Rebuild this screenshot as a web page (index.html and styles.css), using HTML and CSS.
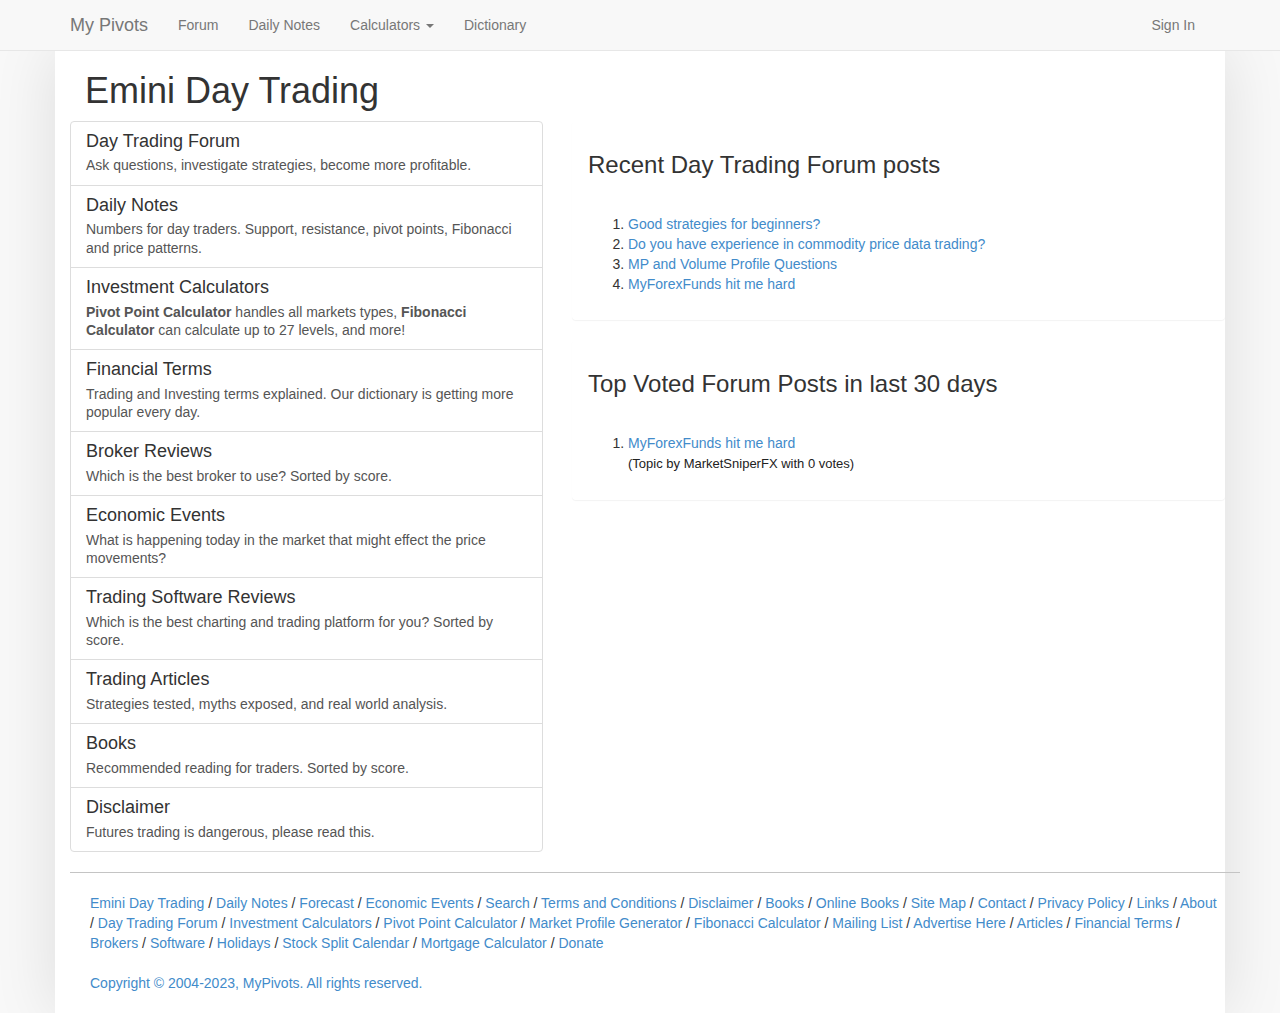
FILE: index.html
```html
<!DOCTYPE html>
<html lang="en">
<head>
<meta charset="utf-8">
<title>Emini Day Trading</title>
<link rel="stylesheet" href="styles.css">
</head>
<body>
<nav class="navbar">
  <div class="nav-inner">
    <a class="brand" href="#">My Pivots</a>
    <ul class="nav">
      <li><a href="#">Forum</a></li>
      <li><a href="#">Daily Notes</a></li>
      <li><a href="#">Calculators <span class="caret"></span></a></li>
      <li><a href="#">Dictionary</a></li>
    </ul>
    <ul class="nav nav-right">
      <li><a href="#">Sign In</a></li>
    </ul>
  </div>
</nav>
<div class="page">
  <h1 class="title">Emini Day Trading</h1>
  <div class="row">
    <div class="list-group">
      <a class="item" href="#"><h4>Day Trading Forum</h4><p>Ask questions, investigate strategies, become more profitable.</p></a>
      <a class="item" href="#"><h4>Daily Notes</h4><p>Numbers for day traders. Support, resistance, pivot points, Fibonacci and price patterns.</p></a>
      <a class="item" href="#"><h4>Investment Calculators</h4><p><b>Pivot Point Calculator</b> handles all markets types, <b>Fibonacci Calculator</b> can calculate up to 27 levels, and more!</p></a>
      <a class="item" href="#"><h4>Financial Terms</h4><p>Trading and Investing terms explained. Our dictionary is getting more popular every day.</p></a>
      <a class="item" href="#"><h4>Broker Reviews</h4><p>Which is the best broker to use? Sorted by score.</p></a>
      <a class="item" href="#"><h4>Economic Events</h4><p>What is happening today in the market that might effect the price movements?</p></a>
      <a class="item" href="#"><h4>Trading Software Reviews</h4><p>Which is the best charting and trading platform for you? Sorted by score.</p></a>
      <a class="item" href="#"><h4>Trading Articles</h4><p>Strategies tested, myths exposed, and real world analysis.</p></a>
      <a class="item" href="#"><h4>Books</h4><p>Recommended reading for traders. Sorted by score.</p></a>
      <a class="item" href="#"><h4>Disclaimer</h4><p>Futures trading is dangerous, please read this.</p></a>
    </div>
    <div class="side">
      <div class="panel">
        <h3>Recent Day Trading Forum posts</h3>
        <ol>
          <li><a href="#">Good strategies for beginners?</a></li>
          <li><a href="#">Do you have experience in commodity price data trading?</a></li>
          <li><a href="#">MP and Volume Profile Questions</a></li>
          <li><a href="#">MyForexFunds hit me hard</a></li>
        </ol>
      </div>
      <div class="panel">
        <h3>Top Voted Forum Posts in last 30 days</h3>
        <ol>
          <li><a href="#">MyForexFunds hit me hard</a><br><small>(Topic by MarketSniperFX with 0 votes)</small></li>
        </ol>
      </div>
    </div>
  </div>
  <footer class="footer">
    <hr class="rule">
    <div class="footer-body">
      <p class="links"><a href="#">Emini Day Trading</a> / <a href="#">Daily Notes</a> / <a href="#">Forecast</a> / <a href="#">Economic Events</a> / <a href="#">Search</a> / <a href="#">Terms and Conditions</a> / <a href="#">Disclaimer</a> / <a href="#">Books</a> / <a href="#">Online Books</a> / <a href="#">Site Map</a> / <a href="#">Contact</a> / <a href="#">Privacy Policy</a> / <a href="#">Links</a> / <a href="#">About</a> / <a href="#">Day Trading Forum</a> / <a href="#">Investment Calculators</a> / <a href="#">Pivot Point Calculator</a> / <a href="#">Market Profile Generator</a> / <a href="#">Fibonacci Calculator</a> / <a href="#">Mailing List</a> / <a href="#">Advertise Here</a> / <a href="#">Articles</a> / <a href="#">Financial Terms</a> / <a href="#">Brokers</a> / <a href="#">Software</a> / <a href="#">Holidays</a> / <a href="#">Stock Split Calendar</a> / <a href="#">Mortgage Calculator</a> / <a href="#">Donate</a></p>
      <p class="copy">Copyright © 2004-2023, MyPivots. All rights reserved.</p>
    </div>
  </footer>
</div>
</body>
</html>
```
FILE: styles.css
```css
* { box-sizing: border-box; }
html, body { margin: 0; }
body {
  background: #f8f8f8;
  font-family: "Liberation Sans", Arial, Helvetica, sans-serif;
  font-size: 14px;
  line-height: 20px;
  color: #333;
}
a { color: #428bca; text-decoration: none; }

.navbar {
  position: relative;
  z-index: 2;
  background: #f8f8f8;
  border-bottom: 1px solid #e7e7e7;
  height: 51px;
}
.nav-inner {
  width: 1170px;
  margin: 0 auto;
  display: flex;
  align-items: flex-start;
}
.brand {
  display: block;
  padding: 15px;
  font-size: 18px;
  line-height: 20px;
  color: #777;
}
.nav {
  list-style: none;
  margin: 0;
  padding: 0;
  display: flex;
}
.nav a {
  display: block;
  padding: 15px;
  line-height: 20px;
  color: #777;
}
.nav-right { margin-left: auto; margin-right: 15px; }
.caret {
  display: inline-block;
  width: 0;
  height: 0;
  margin-left: 2px;
  vertical-align: middle;
  border-top: 4px solid #777;
  border-left: 4px solid transparent;
  border-right: 4px solid transparent;
}

.page {
  position: relative;
  z-index: 1;
  width: 1170px;
  margin: 0 auto;
  background: #fff;
  box-shadow: 0 0 60px rgba(0, 0, 0, 0.11);
  padding: 20px 0 20px 15px;
  min-height: 962px;
}
.title {
  margin: 0 0 10px;
  padding-left: 15px;
  font-size: 36px;
  line-height: 39.6px;
  font-weight: normal;
  color: #333;
}
.row { display: flex; align-items: flex-start; }

.list-group {
  width: 473px;
  flex: none;
  margin: 0 29px 20px 0;
}
.item {
  display: block;
  padding: 10px 15px;
  border: 1px solid #ddd;
  margin-bottom: -1px;
  color: #555;
}
.item:first-child { border-radius: 4px 4px 0 0; }
.item:last-child { border-radius: 0 0 4px 4px; margin-bottom: 0; }
.item h4 {
  margin: 0 0 5px;
  font-size: 18px;
  line-height: 19.8px;
  font-weight: normal;
  color: #333;
}
.item p { margin: 0; line-height: 1.3; }

.side { flex: 1; }
.panel {
  border: 1px solid transparent;
  border-radius: 4px;
  box-shadow: 0 1px 1px rgba(0, 0, 0, 0.05);
  padding: 15px;
  margin-bottom: 20px;
}
.panel h3 {
  margin: 15px 0 10px;
  font-size: 24px;
  line-height: 26.4px;
  font-weight: normal;
  color: #333;
}
.panel ol {
  margin: 36px 0 10px;
  padding-left: 40px;
}
.panel small { font-size: 13px; color: #222; }

.footer { width: 1170px; }
.rule {
  margin: 0 0 20px;
  border: 0;
  border-top: 1px solid #c4c4c4;
  height: 0;
}
.footer-body { padding: 0 20px; }
.links { margin: 0; }
.copy { margin: 20px 0 0; color: #428bca; }
```
